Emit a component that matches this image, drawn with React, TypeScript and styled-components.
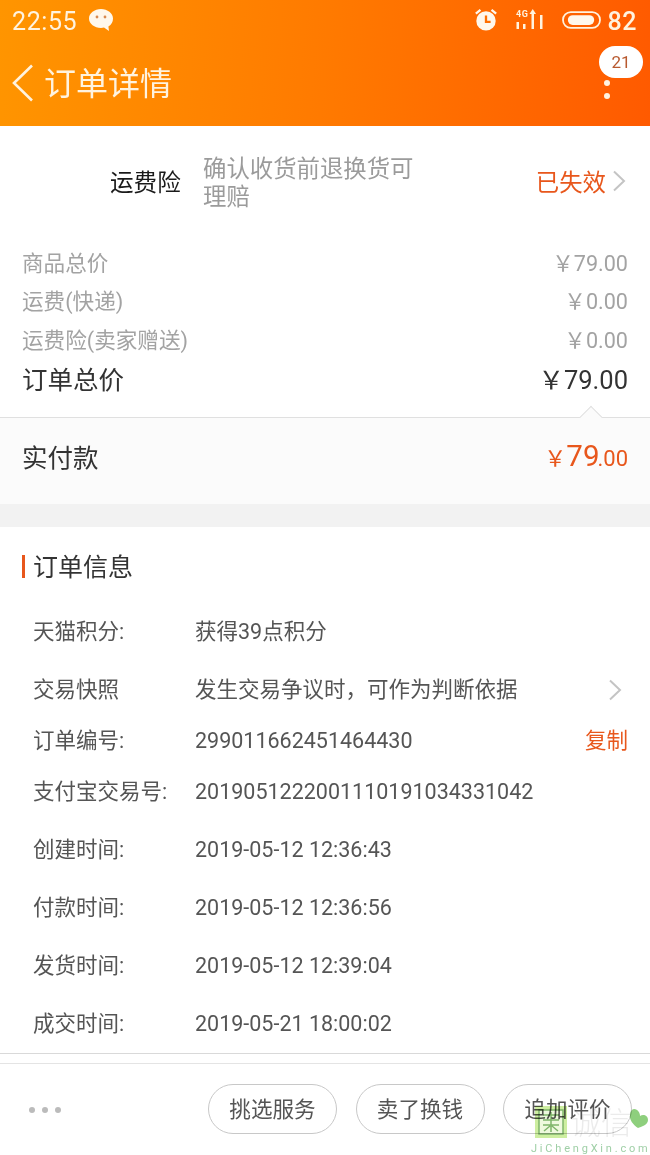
import styled, { createGlobalStyle } from "styled-components";

const Global = createGlobalStyle`
  html, body { margin: 0; padding: 0; background: #fff; }
  body { font-family: Roboto, "Noto Sans CJK SC", sans-serif; }
`;

const prices = [
  { label: "商品总价", value: "￥79.00" },
  { label: "运费(快递)", value: "￥0.00" },
  { label: "运费险(卖家赠送)", value: "￥0.00" },
];

const infos = [
  { label: "天猫积分:", value: "获得39点积分", h: 58 },
  { label: "交易快照", value: "发生交易争议时，可作为判断依据", h: 58, arrow: true },
  { label: "订单编号:", value: "299011662451464430", h: 44, copy: true },
  { label: "支付宝交易号:", value: "2019051222001110191034331042", h: 58 },
  { label: "创建时间:", value: "2019-05-12 12:36:43", h: 58 },
  { label: "付款时间:", value: "2019-05-12 12:36:56", h: 58 },
  { label: "发货时间:", value: "2019-05-12 12:39:04", h: 58 },
  { label: "成交时间:", value: "2019-05-21 18:00:02", h: 58 },
];

const Page = styled.div`
  position: relative;
  width: 650px;
  height: 1155px;
  overflow: hidden;
  background: #fff;
  display: flex;
  flex-direction: column;
`;

const Header = styled.header`
  height: 126px;
  flex: none;
  background: linear-gradient(95deg, #ff9500 0%, #ff7a00 50%, #ff5a00 100%);
  color: #fff;
  display: flex;
  flex-direction: column;
`;

const StatusBar = styled.div`
  height: 40px;
  padding: 0 13px 0 12px;
  display: flex;
  align-items: center;
  font-size: 25px;
  letter-spacing: 0.6px;
  color: #fff3df;
`;

const Clock = styled.span`
  margin-top: 2px;
`;

const StatusRight = styled.div`
  margin-left: auto;
  display: flex;
  align-items: center;
  gap: 18px;
  font-weight: 500;
`;

const BatteryLevel = styled.span`
  margin: 2px 0 0 -12px;
`;

const NavBar = styled.div`
  position: relative;
  flex: 1;
  padding: 0 0 0 11px;
  display: flex;
  align-items: center;
  gap: 9px;
`;

const Title = styled.h1`
  margin: 0 0 4px;
  font-size: 32px;
  font-weight: 400;
  color: #fff3df;
`;

const Badge = styled.span`
  position: absolute;
  top: 6px;
  right: 7px;
  width: 44px;
  height: 32px;
  border-radius: 16px;
  background: #fff;
  color: #b85a30;
  font-size: 17px;
  display: flex;
  align-items: center;
  justify-content: center;
`;

const Dots = styled.span`
  position: absolute;
  top: 40px;
  right: 40px;
  display: flex;
  flex-direction: column;
  gap: 7px;
  i {
    width: 6px;
    height: 6px;
    border-radius: 50%;
    background: #fff3df;
  }
`;

const Insurance = styled.div`
  height: 108px;
  flex: none;
  display: flex;
  align-items: center;
  padding: 0 24px 4px 110px;
`;

const InsuranceName = styled.span`
  width: 93px;
  margin-top: 2px;
  font-size: 23.6px;
  color: #1a1a1a;
`;

const InsuranceDesc = styled.span`
  width: 225px;
  margin-top: 6px;
  font-size: 23.4px;
  line-height: 28px;
  color: #9b9b9b;
`;

const Expired = styled.span`
  margin: 2px 0 0 auto;
  display: flex;
  align-items: center;
  gap: 6px;
  font-size: 23.4px;
  color: #e8571c;
`;

const PriceList = styled.div`
  padding: 4px 22px 0;
`;

const PriceRow = styled.div`
  height: 38.5px;
  display: flex;
  align-items: center;
  justify-content: space-between;
  font-size: 21.6px;
  color: #a3a3a3;
`;

const TotalRow = styled.div`
  height: 40px;
  display: flex;
  align-items: center;
  justify-content: space-between;
  font-size: 25.5px;
  color: #333;
`;

const PaySection = styled.div`
  position: relative;
  flex: none;
  margin-top: 19px;
  height: 76px;
  padding: 0 22px 10px;
  display: flex;
  align-items: center;
  justify-content: space-between;
  background: #fbfbfb;
  border-top: 1px solid #e0e0e0;
  font-size: 25.5px;
  color: #333;
  &::before {
    content: "";
    position: absolute;
    top: -9px;
    right: 51px;
    width: 15px;
    height: 15px;
    transform: rotate(45deg);
    background: #fbfbfb;
    border-top: 1px solid #e0e0e0;
    border-left: 1px solid #e0e0e0;
  }
`;

const PayAmount = styled.span`
  display: flex;
  align-items: baseline;
  color: #e8571c;
  font-size: 22px;
  i {
    font-size: 22px;
    font-style: normal;
  }
  b {
    margin-right: -2px;
    font-size: 29.5px;
    font-weight: 400;
  }
`;

const Gap = styled.div`
  height: 23px;
  flex: none;
  background: #f2f2f2;
`;

const SectionTitle = styled.h2`
  margin: 28px 0 25px 22px;
  padding-left: 8px;
  height: 23px;
  border-left: 3px solid #e8571c;
  font-size: 25px;
  line-height: 25px;
  font-weight: 400;
  color: #333;
`;

const InfoRow = styled.div<{ $h: number }>`
  height: ${(p) => p.$h}px;
  line-height: ${(p) => p.$h}px;
  padding: 0 22px 0 33px;
  display: flex;
  align-items: baseline;
  font-size: 21.5px;
  color: #555;
`;

const InfoLabel = styled.span`
  width: 162px;
  flex: none;
`;

const RowEnd = styled.span`
  margin-left: auto;
  color: #e8571c;
`;

const RowArrow = styled.span`
  margin-left: auto;
  padding-right: 6px;
  align-self: center;
  display: flex;
`;

const Rule = styled.div`
  height: 1px;
  flex: none;
  background: #d9d9d9;
`;

const Footer = styled.footer`
  flex: 1;
  margin-top: 9px;
  border-top: 1px solid #e4e4e4;
  padding: 20px 18px 0 29px;
  display: flex;
  align-items: flex-start;
  gap: 18.5px;
`;

const More = styled.span`
  margin: 23px auto 0 0;
  display: flex;
  gap: 7px;
  i {
    width: 6px;
    height: 6px;
    border-radius: 50%;
    background: #bbb;
  }
`;

const ActionButton = styled.button`
  width: 129px;
  height: 50px;
  border: 1px solid #c8c8c8;
  border-radius: 25px;
  background: #fff;
  padding: 0 0 2px;
  font-family: inherit;
  font-size: 21.6px;
  color: #555;
`;

const Watermark = styled.div`
  position: absolute;
  right: 0;
  bottom: 0;
  width: 118px;
  height: 50px;
  pointer-events: none;
  mix-blend-mode: multiply;
`;

const WatermarkText = styled.span`
  position: absolute;
  left: -1px;
  bottom: 0;
  font-size: 11px;
  letter-spacing: 2.8px;
  color: #9fcfa6;
  white-space: nowrap;
`;

const WatermarkBrand = styled.span`
  position: absolute;
  left: 38px;
  top: 2px;
  font-size: 31px;
  line-height: 34px;
  font-weight: 300;
  color: rgba(190, 190, 190, 0.3);
`;

function Chevron({ color = "#c4c4c4" }: { color?: string }) {
  return (
    <svg width="14" height="22" viewBox="0 0 14 22" fill="none" stroke={color} strokeWidth="2">
      <path d="M2 1.500 12 11 2 20.500" />
    </svg>
  );
}

export default function App() {
  return (
    <Page>
      <Global />
      <Header>
        <StatusBar>
          <Clock>22:55</Clock>
          <svg width="26" height="24" viewBox="0 0 26 24" style={{ marginLeft: 11 }}>
            <path d="M13 1C6.500 1 1 5.300 1 10.500 1 15.700 6.500 20 13 20c1.200 0 2 0 3-.4L21 23l-.6-4.500C23.500 16.700 25 13.800 25 10.500 25 5.300 19.500 1 13 1Z" fill="#fff8ec" />
            <circle cx="9" cy="9" r="1.400" fill="#d98a50" />
            <circle cx="17" cy="9" r="1.400" fill="#d98a50" />
          </svg>
          <StatusRight>
            <svg width="24" height="24" viewBox="0 0 26 26">
              <circle cx="13" cy="14" r="10.500" fill="#fff8ec" />
              <path d="M13 8v7h5" fill="none" stroke="#ff6f00" strokeWidth="2.500" />
              <path d="M2 6 7 2M24 6l-5-4" stroke="#fff8ec" strokeWidth="2.500" />
            </svg>
            <svg width="28" height="22" viewBox="0 0 28 22" fill="#fff3df">
              <rect x="0.500" y="13" width="2.500" height="7" />
              <rect x="7" y="15" width="2.500" height="5" />
              <rect x="15.500" y="4" width="2.500" height="16" />
              <path d="M16.750 0 20 5h-6.500Z" />
              <rect x="24" y="6" width="2.500" height="14" />
              <text x="0" y="8" fontSize="9" fontWeight="700" fontFamily="Roboto, sans-serif">4G</text>
            </svg>
            <svg width="39" height="20" viewBox="0 0 40 20">
              <rect x="1" y="2" width="38" height="16" rx="8" fill="none" stroke="#fff3df" strokeWidth="1.800" />
              <rect x="6" y="5" width="27" height="10" rx="5" fill="#fff8ec" />
            </svg>
            <BatteryLevel>82</BatteryLevel>
          </StatusRight>
        </StatusBar>
        <NavBar>
          <svg width="24" height="38" viewBox="0 0 24 38" fill="none" stroke="#fff3df" strokeWidth="2.600">
            <path d="M21 1.500 3 19l18 17.500" />
          </svg>
          <Title>订单详情</Title>
          <Badge>21</Badge>
          <Dots>
            <i />
            <i />
          </Dots>
        </NavBar>
      </Header>

      <Insurance>
        <InsuranceName>运费险</InsuranceName>
        <InsuranceDesc>确认收货前退换货可理赔</InsuranceDesc>
        <Expired>
          已失效
          <Chevron />
        </Expired>
      </Insurance>

      <PriceList>
        {prices.map((row) => (
          <PriceRow key={row.label}>
            <span>{row.label}</span>
            <span>{row.value}</span>
          </PriceRow>
        ))}
        <TotalRow>
          <span>订单总价</span>
          <span>￥79.00</span>
        </TotalRow>
      </PriceList>

      <PaySection>
        <span>实付款</span>
        <PayAmount>
          <i>￥</i>
          <b>79</b>.00
        </PayAmount>
      </PaySection>
      <Gap />

      <SectionTitle>订单信息</SectionTitle>
      {infos.map((row) => (
        <InfoRow key={row.label} $h={row.h}>
          <InfoLabel>{row.label}</InfoLabel>
          <span>{row.value}</span>
          {row.arrow && (
            <RowArrow>
              <Chevron />
            </RowArrow>
          )}
          {row.copy && <RowEnd>复制</RowEnd>}
        </InfoRow>
      ))}
      <Rule />

      <Footer>
        <More>
          <i />
          <i />
          <i />
        </More>
        <ActionButton>挑选服务</ActionButton>
        <ActionButton>卖了换钱</ActionButton>
        <ActionButton>追加评价</ActionButton>
      </Footer>

      <Watermark>
        <svg width="34" height="34" viewBox="0 0 34 34" style={{ position: "absolute", left: 2, top: 0 }}>
          <rect x="1" y="1" width="32" height="32" fill="#cdeea0" />
          <rect x="5" y="5" width="24" height="24" fill="#eef9dd" stroke="#7fb56a" strokeWidth="1.500" />
          <path d="M9 10h16M9 15h16M9 20h16M17 7v20M10 26l6-5M24 26l-6-5" stroke="#7fb56a" strokeWidth="1.500" fill="none" />
        </svg>
        <WatermarkBrand>诚信</WatermarkBrand>
        <svg width="22" height="22" viewBox="0 0 22 22" style={{ position: "absolute", right: 0, top: 2 }}>
          <path d="M6 2c4 0 6 4 6 7 3-2 8-1 8 4s-7 7-10 8C5 18 1 12 2 8c0-3 2-6 4-6Z" fill="#8ecf7d" />
        </svg>
        <WatermarkText>JiChengXin.com</WatermarkText>
      </Watermark>
    </Page>
  );
}
